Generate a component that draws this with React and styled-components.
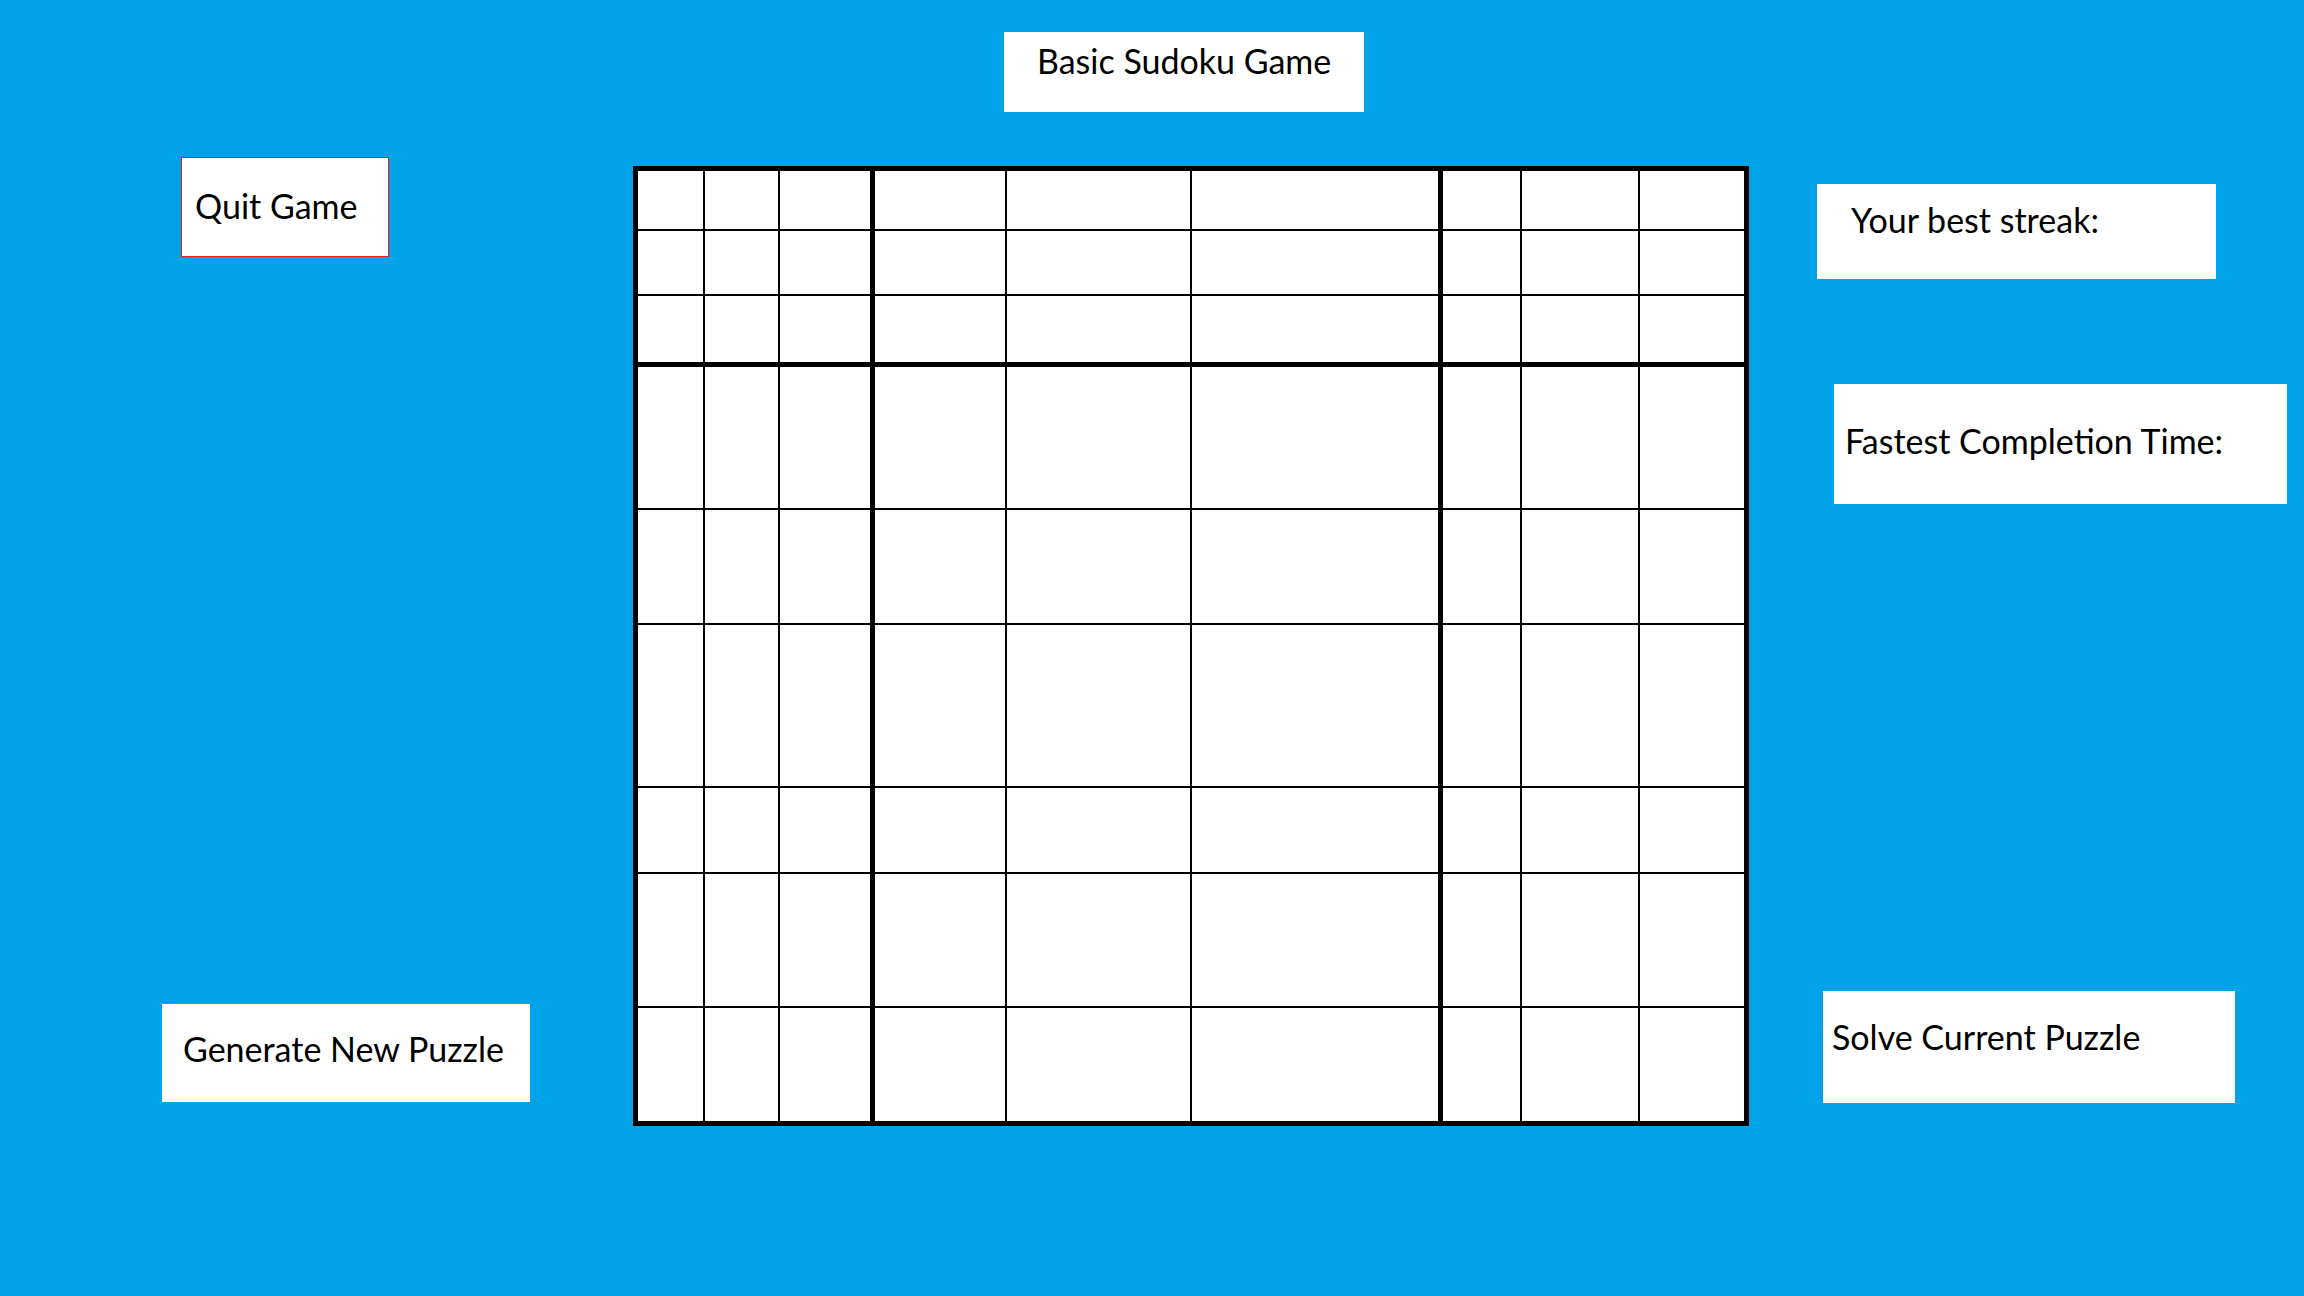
import React from "react";
import styled, { createGlobalStyle } from "styled-components";

const GlobalStyle = createGlobalStyle`
  html, body {
    margin: 0;
    padding: 0;
    background: #00a2e8;
  }
  body {
    font-family: "Lato", "Noto Sans", sans-serif;
  }
`;

const Page = styled.div`
  width: 2304px;
  height: 1296px;
  background: #00a2e8;
  display: grid;
  grid-template-columns: 633px 1116px 1fr;
  overflow: hidden;
`;

const Column = styled.div`
  display: flex;
  flex-direction: column;
  align-items: flex-start;
`;

const Label = styled.div`
  box-sizing: border-box;
  width: ${(p) => p.$w}px;
  height: ${(p) => p.$h}px;
  margin-top: ${(p) => p.$mt}px;
  margin-left: ${(p) => p.$ml}px;
  padding-top: ${(p) => p.$pt}px;
  padding-left: ${(p) => p.$pl}px;
  background: #ffffff;
  border: ${(p) => (p.$outlined ? "1px solid #ed1c24" : "none")};
  color: #000000;
  font-family: "Lato", "Noto Sans", sans-serif;
  font-size: 34px;
  line-height: 1.2;
  white-space: nowrap;
`;

const Board = styled.div`
  box-sizing: border-box;
  width: 1116px;
  height: 960px;
  margin-top: 54px;
  border: 5px solid #000000;
  background: #ffffff;
  display: grid;
  grid-template-columns: 67px 75px 95px 132px 185px 251px 79px 118px 104px;
  grid-template-rows: 60px 65px 71px 143px 115px 163px 86px 134px 113px;
`;

const Cell = styled.div`
  box-sizing: border-box;
  border-right: ${(p) => p.$r}px solid #000000;
  border-bottom: ${(p) => p.$b}px solid #000000;
`;

const cells = [];
for (let r = 0; r < 9; r++) {
  for (let c = 0; c < 9; c++) {
    const right = c === 8 ? 0 : c === 2 || c === 5 ? 5 : 2;
    const bottom = r === 8 ? 0 : r === 2 ? 5 : 2;
    cells.push({ key: `${r}-${c}`, right, bottom });
  }
}

export default function App() {
  return (
    <>
      <GlobalStyle />
      <Page>
        <Column>
          <Label $outlined $w={208} $h={100} $mt={157} $ml={181} $pt={28} $pl={13}>
            Quit Game
          </Label>
          <Label $w={368} $h={98} $mt={747} $ml={162} $pt={25} $pl={21}>
            Generate New Puzzle
          </Label>
        </Column>
        <Column>
          <Label $w={360} $h={80} $mt={32} $ml={371} $pt={9} $pl={33}>
            Basic Sudoku Game
          </Label>
          <Board>
            {cells.map((cell) => (
              <Cell key={cell.key} $r={cell.right} $b={cell.bottom} />
            ))}
          </Board>
        </Column>
        <Column>
          <Label $w={399} $h={95} $mt={184} $ml={68} $pt={16} $pl={34}>
            Your best streak:
          </Label>
          <Label $w={453} $h={120} $mt={105} $ml={85} $pt={37} $pl={11}>
            Fastest Completion Time:
          </Label>
          <Label $w={412} $h={112} $mt={487} $ml={74} $pt={26} $pl={9}>
            Solve Current Puzzle
          </Label>
        </Column>
      </Page>
    </>
  );
}
